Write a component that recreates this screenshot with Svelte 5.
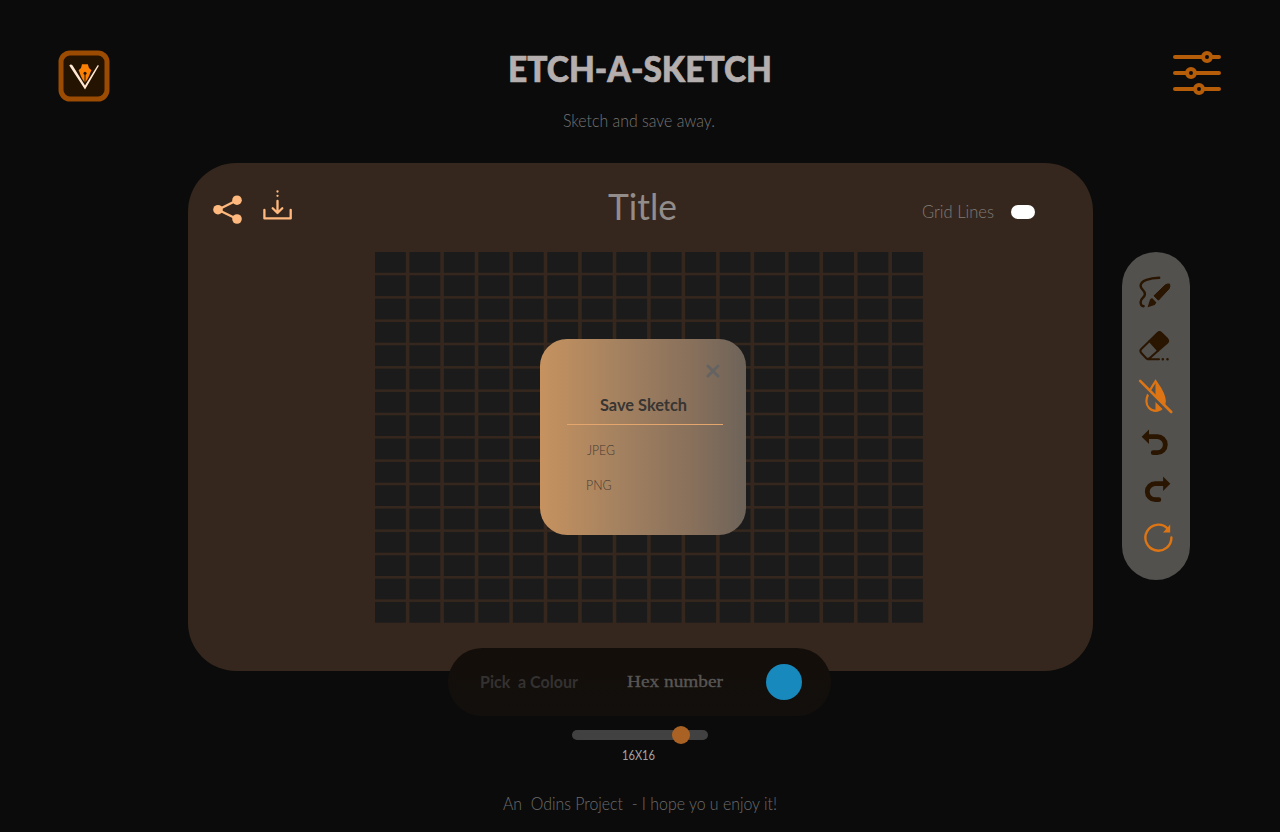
<script>
  const cols = 16;
  const rows = 16;
  const cells = Array.from({ length: cols * rows }, (_, i) => ({
    x: (i % cols) * 34.47,
    y: Math.floor(i / cols) * 23.33
  }));
  const formats = [
    { name: 'JPEG', width: 28 },
    { name: 'PNG', width: 25.5 }
  ];
</script>

{#snippet label(text, width, height, baseline, kind)}
  <svg class="label {kind}" {width} {height} role="img" aria-label={text}>
    <text x="0" y={baseline} textLength={width} lengthAdjust="spacingAndGlyphs">{text}</text>
  </svg>
{/snippet}

<div class="page">
  <header>
    <svg class="logo" width="52" height="52" viewBox="0 0 52 52">
      <rect x="3" y="3" width="46" height="46" rx="9" fill="#241300" stroke="#9c4b02" stroke-width="5" />
      <path d="M11.3 15.6Q12.8 13.6 14.6 15.6L27 35.6L39.6 15.2L41 15.6L27 39.5Z" fill="#ffe7d2" />
      <path d="M24 14.3H29.8L31 18L33.5 20.2C31.6 23.5 31.4 27.5 27 32.6C22.5 27.5 22.3 23.5 20.6 20.2L23 18Z" fill="#fb8003" />
      <path d="M27 23.5V32.6" stroke="#241300" stroke-width="1" />
      <circle cx="27" cy="23.3" r="1.5" fill="#241300" />
    </svg>
    <div class="heading">
      {@render label('ETCH-A-SKETCH', 264, 54, 32, 'brand')}
      {@render label('Sketch and save away.', 152, 30, 23, 'tagline')}
    </div>
    <svg class="settings" width="50" height="46" viewBox="0 0 50 46">
      <g stroke="#b55d08" stroke-width="4" stroke-linecap="round" fill="#0b0b0b">
        <path d="M3 7H47M3 23H47M3 39H47" />
        <circle cx="35" cy="7" r="4" />
        <circle cx="19" cy="23" r="4" />
        <circle cx="27" cy="39" r="4" />
      </g>
    </svg>
  </header>

  <main>
    <section class="board">
      <div class="board-head">
        <div class="actions">
          <svg width="32" height="36" viewBox="0 0 32 36" fill="#ffb97e">
            <path d="M25 10.2L6 19.7L25 29" fill="none" stroke="#ffb97e" stroke-width="2.3" />
            <circle cx="6" cy="19.7" r="4.8" />
            <circle cx="25" cy="10.2" r="4.8" />
            <circle cx="25" cy="29" r="4.8" />
          </svg>
          <svg width="32" height="36" viewBox="0 0 32 36" fill="none" stroke="#ffb97e" stroke-width="2.3" stroke-linecap="round" stroke-linejoin="round">
            <path d="M2.4 20V28.4H28.7V20M15.5 11V22.8M10.7 18.3L15.5 23L20.3 18.3" />
            <path d="M15.5 1.5V1.51M15.5 5.8V5.81" />
          </svg>
        </div>
        {@render label('Title', 69, 50, 31, 'sketch-name')}
        <div class="toggle-row">
          {@render label('Grid Lines', 72, 28, 20, 'toggle-label')}
          <span class="toggle"></span>
        </div>
      </div>
      <div class="canvas">
        <svg width="548" height="371">
          {#each cells as c}
            <rect x={c.x} y={c.y} width="30.8" height="20.7" fill="#1b1b1b" />
          {/each}
        </svg>
        <div class="modal">
          <svg class="close" width="14" height="14" viewBox="0 0 14 14">
            <path d="M2 2L12 12M12 2L2 12" stroke="#656362" stroke-width="3" stroke-linecap="round" />
          </svg>
          <div class="modal-title">{@render label('Save Sketch', 87, 24, 17, 'strong')}</div>
          <div class="rule"></div>
          {#each formats as f}
            <div class="format">{@render label(f.name, f.width, 20, 14.5, 'format-name')}</div>
          {/each}
        </div>
      </div>
    </section>

    <aside>
      <svg width="68" height="50" viewBox="0 16 68 50">
        <path d="M37.2 25.8C28 26 18.6 28.5 18.6 33.8C18.6 38 23.3 38 22.9 42.5C22.4 46 18.6 46 18.6 50C18.6 52.6 20 54.2 21.6 54.3" fill="none" stroke="#291500" stroke-width="2.4" stroke-linecap="round" />
        <path d="M25.6 55.3L28 47.6L30 46.1L34.4 50.6L32.7 52.9Z" fill="#291500" />
        <path d="M32 43.8L43.2 33Q45.2 31.6 47.6 32Q48.3 34.7 47 36.8L36.4 48.2Z" fill="#291500" stroke="#291500" stroke-linejoin="round" />
      </svg>
      <svg width="68" height="52" viewBox="0 66 68 52" fill="none" stroke="#291500" stroke-width="2" stroke-linecap="round" stroke-linejoin="round">
        <path d="M27.5 89L35.6 80.9Q37.5 79.2 39.3 80.9L45.2 86.8Q47 88.8 45.2 90.7L36 98.7Z" fill="#291500" />
        <path d="M27.5 89L19.3 97Q17.4 99 19.3 101L24 106Q25.5 107.8 27.3 106.4L36 98.7M25.5 107.2H37" />
        <path d="M40.8 107.2V107.21M45.5 107.2V107.21" stroke-width="2.6" />
      </svg>
      <svg width="68" height="50" viewBox="0 118 68 50" fill="none" stroke="#dd7514" stroke-linecap="round">
        <path d="M33.5 129.2C31 133.5 24.4 141.5 24.4 149.2A9.2 9.6 0 0 0 42.8 149.2C42.8 141.5 36.5 133.5 33.5 129.2Z" stroke-width="2.2" />
        <path d="M33.5 129.2C36.5 133.5 42.8 141.5 42.8 149.2A9.2 9.6 0 0 1 33.5 158.8Z" fill="#dd7514" stroke="none" />
        <path d="M18.5 132.6L47 161.1" stroke="#52514e" stroke-width="3.6" stroke-linecap="butt" />
        <path d="M18.1 128.8L49.2 160" stroke-width="2.6" />
      </svg>
      <svg width="68" height="46" viewBox="0 168 68 46">
        <path d="M27 184.7H35.3A8 8 0 0 1 35.3 200.7H31.2" fill="none" stroke="#291500" stroke-width="4.8" stroke-linecap="round" />
        <path d="M19.7 184.7L27 177.5V191.9Z" fill="#291500" />
      </svg>
      <svg width="68" height="48" viewBox="0 214 68 48">
        <path d="M41.3 231.7H33.3A8 8 0 0 0 33.3 247.7H36.8" fill="none" stroke="#291500" stroke-width="4.8" stroke-linecap="round" />
        <path d="M48.3 231.7L41.1 224.5V238.9Z" fill="#291500" />
      </svg>
      <svg width="68" height="46" viewBox="0 262 68 46">
        <path d="M49.4 285.5A13 13 0 1 1 45.5 276.4" fill="none" stroke="#dd7514" stroke-width="2.4" stroke-linecap="round" />
        <path d="M48.2 272.4V280.4H41Z" fill="#dd7514" />
      </svg>
    </aside>
  </main>

  <div class="picker">
    {@render label('Pick  a Colour', 98, 28, 20, 'pick')}
    {@render label('Hex number', 96, 28, 19, 'hex')}
    <span class="swatch"></span>
  </div>

  <div class="size">
    <div class="track"><span class="knob"></span></div>
    {@render label('16X16', 33, 20, 15, 'dims')}
  </div>

  <footer>{@render label('An  Odins Project  - I hope yo u enjoy it!', 274, 28, 20, 'credit')}</footer>
</div>

<style>
  :global(body) { background: #0b0b0b; }
  .page {
    width: 1280px;
    height: 832px;
    box-sizing: border-box;
    overflow: hidden;
    background: #0b0b0b;
    display: flex;
    flex-direction: column;
    align-items: center;
    font-family: Lato, sans-serif;
  }
  svg { display: block; flex: none; }
  .label { overflow: visible; font-weight: 300; }
  .label text { white-space: pre; }
  header {
    width: 1164px;
    height: 163px;
    flex: none;
    box-sizing: border-box;
    padding-top: 50px;
    display: grid;
    grid-template-columns: 1fr auto 1fr;
    align-items: start;
  }
  .heading { display: flex; flex-direction: column; align-items: center; }
  .settings { justify-self: end; }
  .brand { font-size: 36.5px; font-weight: 900; fill: #b4afae; stroke: #b4afae; stroke-width: 0.7px; }
  .tagline { font-size: 17.5px; font-weight: 300; fill: #747474; margin-right: 2px; }
  main {
    align-self: flex-start;
    margin-left: 188px;
    display: flex;
    gap: 29px;
    flex: none;
  }
  .board {
    width: 905px;
    height: 508px;
    border-radius: 48px;
    background: #35271d;
  }
  .board-head {
    height: 89px;
    box-sizing: border-box;
    padding: 26px 58px 0 24px;
    display: grid;
    grid-template-columns: 396px 1fr auto;
    align-items: start;
  }
  .actions { display: flex; gap: 18px; padding-top: 1px; }
  .sketch-name { font-size: 36px; font-weight: 400; fill: #928c8b; }
  .toggle-row { display: flex; align-items: center; gap: 17px; padding-top: 9px; }
  .toggle-label { font-size: 17px; fill: #817a75; }
  .toggle { width: 24px; height: 14px; border-radius: 7px; background: #fff; }
  .canvas { position: relative; width: 548px; margin-left: 187px; }
  .modal {
    position: absolute;
    left: 165px;
    top: 87px;
    width: 206px;
    height: 196px;
    box-sizing: border-box;
    padding: 25px 23px 0 27px;
    border-radius: 27px;
    background: linear-gradient(90deg, #c6925f 0%, #a58260 37%, #866f5b 76%, #6d6359 100%);
  }
  .close { margin-left: 139px; }
  .modal-title { margin: 16px 0 6px 33px; }
  .rule { height: 1px; background: #e5a66e; }
  .format { margin: 15px 0 0 18.5px; }
  .rule + .format { margin-left: 20px; }
  .strong { font-size: 17px; font-weight: 700; fill: #383533; }
  .format-name { font-size: 14px; font-weight: 300; fill: #463b32; }
  aside {
    width: 68px;
    height: 328px;
    margin-top: 89px;
    box-sizing: border-box;
    padding-top: 16px;
    border-radius: 34px;
    background: #52514e;
  }
  .picker {
    position: relative;
    width: 383px;
    height: 68px;
    flex: none;
    margin: -23px 1px 0 0;
    box-sizing: border-box;
    padding: 0 29px 0 32px;
    border-radius: 34px;
    background: linear-gradient(#140e0a, #120f0c);
    display: flex;
    align-items: center;
  }
  .pick { font-size: 17.5px; font-weight: 700; fill: #343231; }
  .hex { margin-left: 49px; font-family: "Liberation Serif", serif; font-size: 17.5px; fill: #595755; stroke: #595755; stroke-width: 0.35px; }
  .swatch { width: 36px; height: 36px; margin-left: auto; border-radius: 50%; background: #1889bd; }
  .size {
    margin-top: 14px;
    display: flex;
    flex-direction: column;
    align-items: center;
    gap: 5px;
  }
  .track { position: relative; width: 136px; height: 10px; border-radius: 5px; background: #414141; }
  .knob {
    position: absolute;
    left: 100px;
    top: -4px;
    width: 18px;
    height: 18px;
    border-radius: 50%;
    background: #a96224;
  }
  .size .label { margin-right: 3px; }
  .dims { font-size: 13.5px; font-weight: 400; fill: #a2a2a2; }
  footer { margin-top: 25px; }
  .credit { font-size: 17px; font-weight: 300; fill: #6c6c6c; }
</style>
